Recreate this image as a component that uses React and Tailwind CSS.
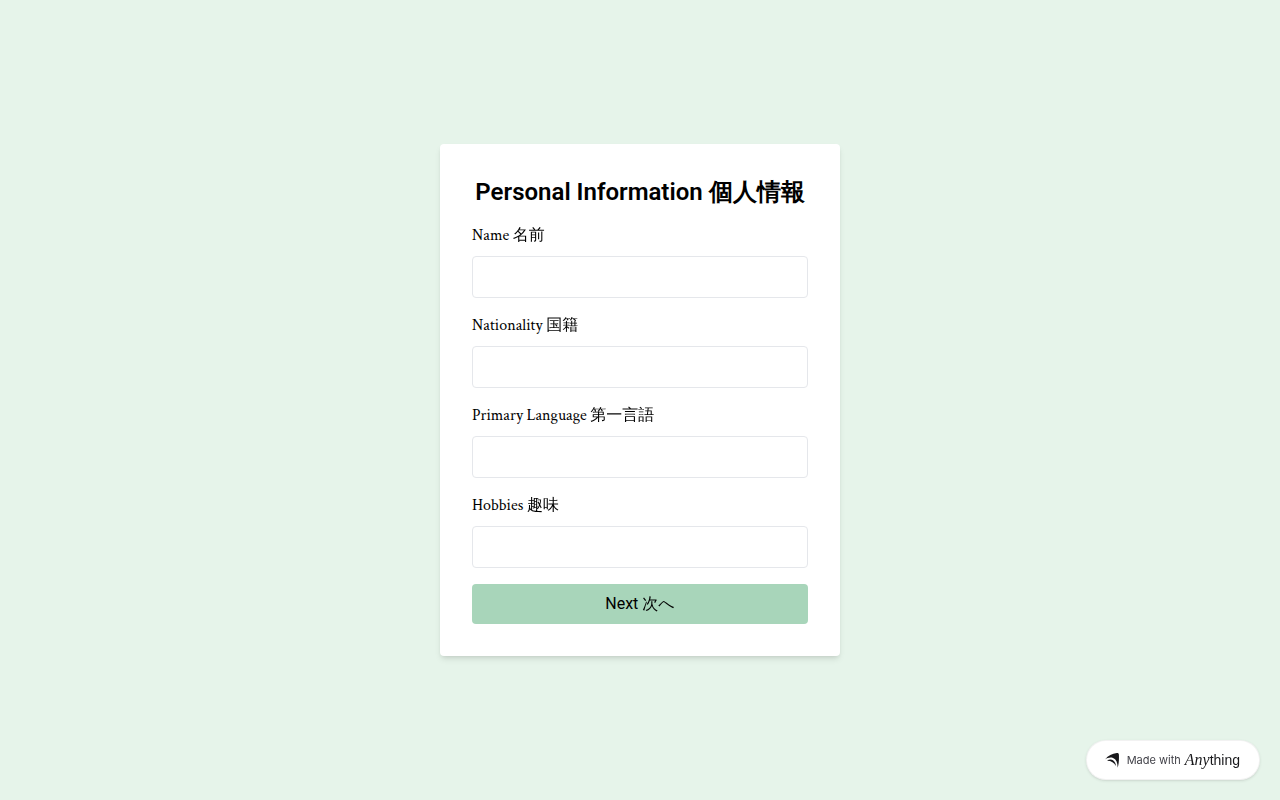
const fields = [
  { id: "name", label: "Name 名前" },
  { id: "nationality", label: "Nationality 国籍" },
  { id: "language", label: "Primary Language 第一言語" },
  { id: "hobbies", label: "Hobbies 趣味" },
];

function ArrowMark() {
  return (
    <svg viewBox="0 0 14 15" className="h-[15px] w-3.5 shrink-0" fill="#18181b" aria-hidden="true">
      <path d="M0 6.400C3.200 2.600 7.200.8 11.800.1 13.100-.1 13.900.5 13.900 1.800c.2 4.800 0 9.200-1.300 13C12.700 9.600 11.300 6.300 8 5 5.400 4 2.600 4.800 0 6.400Z" />
      <path d="M2 7.800C4 6.200 6.400 6 8.300 7.400c1.900 1.400 2.500 3.400 2.600 5.500C9.200 9.800 6.400 7.800 2 7.800Z" />
    </svg>
  );
}

export default function App() {
  return (
    <div className="flex min-h-screen items-center justify-center bg-[#e6f4ea] p-4 text-black antialiased">
      <form
        className="w-full max-w-[400px] rounded bg-white p-8 shadow-md"
        onSubmit={(e) => e.preventDefault()}
      >
        <h1 className="mb-4 text-center font-[Roboto,sans-serif] text-2xl font-semibold">
          Personal Information 個人情報
        </h1>
        {fields.map((field) => (
          <div key={field.id} className="mb-4">
            <label
              htmlFor={field.id}
              className="mb-2 block font-['Crimson_Text','Liberation_Serif','WenQuanYi_Zen_Hei','Noto_Sans_CJK_JP',serif] text-base"
            >
              {field.label}
            </label>
            <input
              id={field.id}
              type="text"
              className="block h-[42px] w-full rounded border border-gray-200 bg-white px-2 font-[Roboto,sans-serif]"
            />
          </div>
        ))}
        <button
          type="submit"
          className="block h-10 w-full rounded bg-[#a8d5ba] font-[Roboto,'WenQuanYi_Zen_Hei','IPAGothic','Noto_Sans_CJK_JP',sans-serif] text-base"
        >
          Next 次へ
        </button>
      </form>
      <a
        href="#anything"
        className="fixed right-5 bottom-5 flex h-10 items-center rounded-full border border-black/5 bg-white pr-[19px] pl-[18px] text-[#18181b] shadow-sm"
      >
        <ArrowMark />
        <span className="ml-2 font-[Inter,sans-serif] text-[11px] text-[#3f3f46]">Made with</span>
        <span className="ml-1 flex items-baseline">
          <span className="font-['Liberation_Serif',serif] text-base italic">Any</span>
          <span className="font-['Liberation_Sans',sans-serif] text-sm">thing</span>
        </span>
      </a>
    </div>
  );
}
